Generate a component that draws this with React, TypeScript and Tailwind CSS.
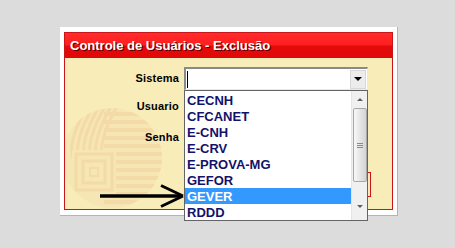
import React from "react";

const items = ["CECNH", "CFCANET", "E-CNH", "E-CRV", "E-PROVA-MG", "GEFOR", "GEVER", "RDDD"];

function Watermark() {
  const stripes = [];
  for (let y = 112; y < 210; y += 8) {
    stripes.push(<rect key={y} x={104} y={y} width={66} height={4} fill="#f0cf9c" />);
  }
  const merid = [];
  for (let i = 0; i < 6; i++) {
    const x = 70 + i * 6;
    merid.push(
      <path key={i} d={`M${x + 16} 108 Q ${x - 4} 145 ${x + 4} 160`} stroke="#f0cf9c" strokeWidth={3} fill="none" />
    );
  }
  return (
    <svg className="absolute left-0 top-0 pointer-events-none" width={327} height={176} viewBox="65 33 327 176">
      <defs>
        <clipPath id="globe">
          <circle cx={112} cy={158} r={50} />
        </clipPath>
      </defs>
      <g clipPath="url(#globe)" opacity={0.6}>
        <circle cx={112} cy={158} r={50} fill="#f5e3b0" />
        {stripes}
        {merid}
        <rect x={72} y={150} width={44} height={44} fill="#f5e3b0" />
        <rect x={76} y={154} width={36} height={36} fill="none" stroke="#f0cf9c" strokeWidth={3} />
        <rect x={83} y={161} width={22} height={22} fill="none" stroke="#f0cf9c" strokeWidth={3} />
        <rect x={90} y={168} width={8} height={8} fill="none" stroke="#f0cf9c" strokeWidth={2} />
      </g>
    </svg>
  );
}

function DropList() {
  return (
    <div className="absolute left-0 top-[23px] z-20 w-[184px] h-[131px] bg-white border border-[#646464] flex overflow-hidden">
      <div className="w-[166px] flex flex-col pt-[1px]">
        {items.map((it) => (
          <div
            key={it}
            className={
              "h-[16px] shrink-0 flex items-center pl-[2px] text-[13px] font-bold leading-none " +
              (it === "GEVER" ? "bg-[#3399ff] text-white" : "text-[#12126a]")
            }
          >
            {it}
          </div>
        ))}
      </div>
      <div className="w-[16px] bg-[#f0f0f0] flex flex-col items-center border-l border-[#e4e4e4]">
        <div className="h-[17px] w-full flex items-center justify-center">
          <div className="w-0 h-0 border-l-[3px] border-r-[3px] border-b-[3px] border-l-transparent border-r-transparent border-b-[#606060]" />
        </div>
        <div className="w-[14px] h-[74px] rounded-[2px] border border-[#a8a8a8] bg-[linear-gradient(90deg,#f8f8f8,#e2e2e2_60%,#d4d4d4)] flex flex-col items-center justify-center gap-[1px]">
          <div className="w-[6px] h-[1px] bg-[#8a8a8a]" />
          <div className="w-[6px] h-[1px] bg-[#8a8a8a]" />
          <div className="w-[6px] h-[1px] bg-[#8a8a8a]" />
        </div>
        <div className="flex-1" />
        <div className="h-[22px] w-full flex items-center justify-center pb-[6px]">
          <div className="w-0 h-0 border-l-[3px] border-r-[3px] border-t-[3px] border-l-transparent border-r-transparent border-t-[#606060]" />
        </div>
      </div>
    </div>
  );
}

export default function App() {
  return (
    <div
      className="relative w-[455px] h-[248px] bg-[#dcdcdc] pt-[27px] pl-[60px] overflow-hidden"
      style={{ fontFamily: '"Liberation Sans", Arial, sans-serif' }}
    >
      <div className="w-[338px] h-[189px] bg-white border-r border-b border-[#b4b4b4] pt-[5px] pl-[4px]">
        <div className="relative w-[329px] h-[178px] border border-[#c8161a] bg-[#f8ecb8]">
          <Watermark />
          <div className="relative h-[25px] bg-[linear-gradient(#ff2b2b_0%,#ff1f1f_48%,#e30a0a_52%,#e00808_100%)] flex items-center pl-[5px]">
            <span className="text-white text-[13px] font-bold [text-shadow:1px_1px_0_#5a0000] leading-none">
              Controle de Usuários - Exclusão
            </span>
          </div>
          <div className="relative grid grid-cols-[114px_184px] gap-x-[5px] mt-[9px]">
            <div className="h-[23px] flex items-center justify-end text-[11px] font-bold tracking-[0.2px] text-black">
              Sistema
            </div>
            <div className="relative h-[23px]">
              <div className="h-full bg-white border-t-2 border-l-2 border-t-[#8a8a8a] border-l-[#8a8a8a] border-b border-r border-b-[#e8e8e8] border-r-[#e8e8e8] flex items-center">
                <div className="ml-[1px] w-[1px] h-[17px] bg-black" />
                <div className="flex-1" />
                <div className="w-[16px] h-[19px] mr-[1px] bg-[#ececec] border border-[#d8d8d8] flex items-center justify-center">
                  <div className="w-0 h-0 border-l-[4px] border-r-[4px] border-t-[4px] border-l-transparent border-r-transparent border-t-black" />
                </div>
              </div>
              <DropList />
            </div>

            <div className="h-[21px] mt-[6px] flex items-center justify-end text-[11px] font-bold tracking-[0.2px] text-black">
              Usuario
            </div>
            <div className="h-[21px] mt-[6px] bg-white border border-[#8a8a8a]" />

            <div className="h-[21px] mt-[10px] flex items-center justify-end text-[11px] font-bold tracking-[0.2px] text-black">
              Senha
            </div>
            <div className="h-[21px] mt-[10px] bg-white border border-[#8a8a8a]" />

            <div />
            <div className="mt-[24px] flex justify-end mr-[-3px]">
              <div className="w-[80px] h-[25px] border border-[#c8161a] bg-[#f8ecb8]" />
            </div>
          </div>
        </div>
      </div>

      <svg className="absolute left-0 top-0 pointer-events-none z-30" width={455} height={248}>
        <line x1={100} y1={196} x2={181} y2={196} stroke="#000" strokeWidth={3.5} />
        <line x1={161} y1={185.5} x2={183} y2={196} stroke="#000" strokeWidth={3} />
        <line x1={161} y1={206.5} x2={183} y2={196} stroke="#000" strokeWidth={3} />
      </svg>
    </div>
  );
}
